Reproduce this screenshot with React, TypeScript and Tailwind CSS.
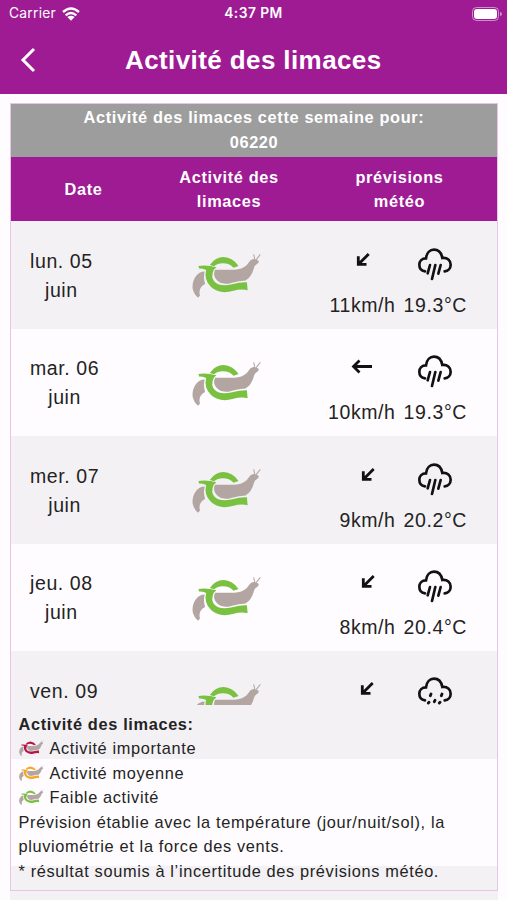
import React from 'react'

const days = [
  { day: 'lun. 05', wind: '11km/h', temp: '19.3°C', dir: 'sw', sky: 'rain' },
  { day: 'mar. 06', wind: '10km/h', temp: '19.3°C', dir: 'w', sky: 'rain' },
  { day: 'mer. 07', wind: '9km/h', temp: '20.2°C', dir: 'sw', sky: 'rain' },
  { day: 'jeu. 08', wind: '8km/h', temp: '20.4°C', dir: 'sw', sky: 'rain' },
]

const levels = [
  { label: 'Activité importante', color: '#b8124a' },
  { label: 'Activité moyenne', color: '#f5a623' },
  { label: 'Faible activité', color: '#7ac142' },
]

const Slug = ({ color, className }: { color: string; className: string }) => (
  <svg viewBox="38 38 206 132" className={className} preserveAspectRatio="none">
    <path fill="#b3a6a2" d="M76 92C52 92 37 118 40 143Q44 160 56 169L62 163Q58 150 64 140Q69 132 77 129Q71 110 76 92Z" />
    <path fill="#b3a6a2" d="M107 87H165Q187 86 201 74L212 60Q218 54 226 56L236 60Q240 66 231 71Q226 73 223 82Q216 108 198 119Q178 120 158 125Q130 134 115 120Q98 104 107 87Z" />
    <path stroke="#b3a6a2" strokeWidth="3" fill="none" d="M226 58L222 42M229 58L242 42" />
    <path fill={color} d="M91 73Q108 50 132 50Q160 52 177 76L162 81Q150 68 130 68Q114 68 104 77Z" />
    <path fill={color} d="M57 76Q82 72 111 80L103 87Q92 110 107 124Q122 138 158 130Q182 123 202 124L204 147Q184 142 162 149Q120 161 95 138Q73 118 80 88Q70 82 60 84Z" />
  </svg>
)

const Sky = ({ kind }: { kind: string }) => (
  <svg viewBox="0 0 102 99" className="h-[33px] w-[34px]" fill="none" stroke="#111" strokeWidth="8" strokeLinecap="round">
    <path d="M21 70C9 68 4 59 4 50C4 39 12 31 24 31C26 14 36 5 48 5C61 5 70 14 73 30C88 28 98 38 98 50C98 61 90 69 80 70" />
    {kind === 'rain'
      ? <path d="M36 51L29 76M52 51L42 93M68 51L61 77" />
      : <path strokeWidth="8.5" d="M39 51L37 56M72 51L70 56M33 76L31 78M51 70L49 74M66 76L64 78" />}
  </svg>
)

const WindArrow = ({ dir }: { dir: string }) => (
  <svg viewBox="0 0 24 24" className="h-6 w-6" fill="none" stroke="#111" strokeWidth="2.8">
    {dir === 'w'
      ? <path d="M3.5 11.5H22M9.5 5.5L3.5 11.5L9.5 17.5" />
      : <path d="M17.7 6L7.5 16.2M7.3 8.2V16.4H15.5" />}
  </svg>
)

const App = () => {
  return (
    <div className="h-[900px] w-[507px] overflow-hidden bg-[#fefcfe] font-['Liberation_Sans',Arial,sans-serif] text-[16.33px] leading-[24.5px] tracking-[0.65px] text-[#232323]">
      <header className="h-[94px] bg-[#9e1b94] text-white">
        <div className="grid h-[27px] grid-cols-3 items-center px-[9px] font-[Inter,sans-serif] text-[13.8px] leading-none tracking-[0.25px]">
          <div className="flex items-center gap-[6px]">
            <span>Carrier</span>
            <svg viewBox="0 0 54 42" className="h-[14px] w-[18px]" fill="none" stroke="#fff" strokeWidth="7">
              <path d="M3 15Q27 -6 51 15M11 25Q27 11 43 25" />
              <path fill="#fff" stroke="none" d="M16 30Q27 22 38 30L27 41Z" />
            </svg>
          </div>
          <div className="text-center font-semibold tracking-[0.45px]">4:37 PM</div>
          <div className="flex items-center justify-end gap-px">
            <div className="h-[14px] w-[27px] rounded-[4.5px] border border-white/50 p-px">
              <div className="h-full rounded-[3px] bg-white" />
            </div>
            <div className="-mr-1 h-1 w-[2px] rounded-r bg-white/50" />
          </div>
        </div>
        <div className="flex h-[66px] items-center">
          <svg viewBox="0 0 16 26" className="ml-[20px] h-[26px] w-4" fill="none" stroke="#fff" strokeWidth="3">
            <path d="M14 2L3 13L14 24" />
          </svg>
          <h1 className="ml-[89px] text-[26px] font-bold tracking-[0.4px] whitespace-nowrap">Activité des limaces</h1>
        </div>
      </header>

      <main className="mt-[9px] ml-[10px] w-[488px]">
        <div className="relative h-[788px] border border-[#e6c5e6]">
          <div className="h-[53px] bg-[#9d9d9d] px-[60px] pt-px text-center font-bold text-white">
            Activité des limaces cette semaine pour: 06220
          </div>
          <div className="grid h-[64px] grid-cols-[145px_146px_195px] items-center bg-[#9e1b94] text-center font-bold text-white">
            <div>Date</div>
            <div className="px-5">Activité des limaces</div>
            <div className="px-12">prévisions météo</div>
          </div>
          {days.map((d) => (
            <div key={d.day} className="flex h-[107.5px] text-[19.5px] leading-[29.4px] tracking-[0.6px] even:bg-[#fefcfe] odd:bg-[#f3f1f4]">
              <div className="w-[181px] shrink-0 pt-[25.5px] pl-[19px]">
                <div className="w-fit text-center">
                  <p>{d.day}</p>
                  <p>juin</p>
                </div>
              </div>
              <Slug color="#7ac142" className="mt-8 h-[45px] w-[69px] shrink-0" />
              <div className="flex flex-1 justify-end gap-[8px] pt-[26.5px] pr-[30px]">
                <div className="flex flex-col items-center">
                  <div className="h-[43px]"><WindArrow dir={d.dir} /></div>
                  <p>{d.wind}</p>
                </div>
                <div className="flex flex-col items-center">
                  <div className="h-[43px]"><Sky kind={d.sky} /></div>
                  <p>{d.temp}</p>
                </div>
              </div>
            </div>
          ))}

          {/* next day is cut by the pinned legend */}
          <div className="h-[107.5px] bg-[#f3f1f4]">
            <div className="flex h-[54px] text-[19.5px] leading-[29.4px] tracking-[0.6px]">
              <p className="w-[181px] shrink-0 pt-[25.5px] pl-[19px]">ven. 09</p>
              <div className="h-[54px] w-[163px] shrink-0 overflow-hidden pt-8">
                <Slug color="#7ac142" className="h-[45px] w-[69px]" />
              </div>
              <div className="w-[63px] pt-[26px]"><WindArrow dir="sw" /></div>
              <div className="h-[54px] overflow-hidden pt-[26px]"><Sky kind="drizzle" /></div>
            </div>
          </div>
          <div className="h-[107.5px]" />
          <div className="h-[24px] bg-[#f3f1f4]" />

          <div className="absolute bottom-[7px] left-[7.5px] w-[450px]">
            <p className="font-bold">Activité des limaces:</p>
            {levels.map((l) => (
              <div key={l.label} className="flex items-center gap-[6px]">
                <Slug color={l.color} className="h-4 w-[25px]" />
                <span>{l.label}</span>
              </div>
            ))}
            <p>Prévision établie avec la température (jour/nuit/sol), la pluviométrie et la force des vents.</p>
            <p>* résultat soumis à l’incertitude des prévisions météo.</p>
          </div>
        </div>
        <div className="h-[10px] bg-[#f3f1f4]" />
      </main>
    </div>
  )
}

export default App
